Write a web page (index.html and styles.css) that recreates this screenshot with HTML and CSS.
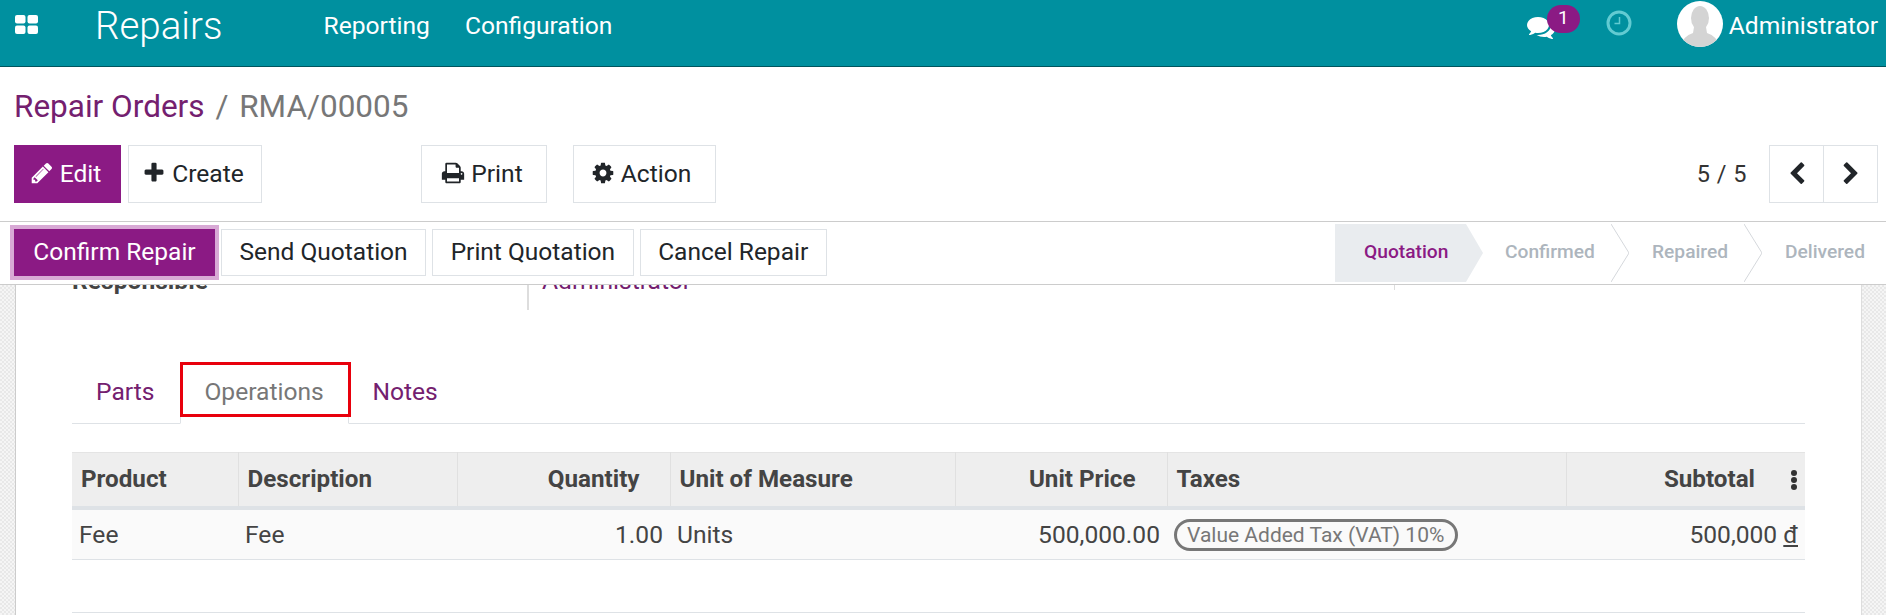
FILE: index.html
```html
<!DOCTYPE html>
<html lang="en">
<head>
    <meta charset="UTF-8">
    <meta name="viewport" content="width=device-width, initial-scale=1.0">
    <title>Repair Orders - RMA/00005</title>
    <link rel="stylesheet" href="styles.css">
</head>
<body>
    <header class="navbar">
        <div class="nav-left">
            <svg class="apps-icon" viewBox="0 0 23 19"><rect width="10.5" height="8.5" rx="2"/><rect x="12.5" width="10.5" height="8.5" rx="2"/><rect y="10.5" width="10.5" height="8.5" rx="2"/><rect x="12.5" y="10.5" width="10.5" height="8.5" rx="2"/></svg>
            <span class="app-name">Repairs</span>
            <a class="nav-link nav-link-first">Reporting</a>
            <a class="nav-link">Configuration</a>
        </div>
        <div class="nav-right">
            <div class="messages">
                <svg class="comments-icon" viewBox="0 0 1792 1792"><path d="M1408 768q0 139-94 257t-256.5 186.5-353.5 68.5q-86 0-176-16-124 88-278 128-36 9-86 16h-3q-11 0-20.5-8t-11.5-21q-1-3-1-6.5t.5-6.5 2-6l2.5-5 3.5-5.5 4-5 4.5-5 4-4.5q5-6 23-25t26-29.5 22.5-29 25-38.5 20.5-44q-124-72-195-177t-71-224q0-139 94-257t256.5-186.5 353.5-68.5 353.5 68.5 256.5 186.5 94 257zm384 256q0 120-71 224.5t-195 176.5q10 24 20.5 44t25 38.5 22.5 29 26 29.5 23 25q1 1 4 4.5t4.5 5 4 5 3.5 5.5l2.5 5 2 6 .5 6.5-1 6.5q-3 14-13 22t-22 7q-50-7-86-16-154-40-278-128-90 16-176 16-271 0-472-132 58 4 88 4 161 0 309-45t264-129q125-92 192-212t67-254q0-77-23-152 129 71 204 178t75 230z"/></svg>
                <span class="msg-badge">1</span>
            </div>
            <svg class="clock-icon" viewBox="0 0 26 26"><circle cx="13" cy="13" r="11" fill="none" stroke="#62cbd2" stroke-width="3"/><path d="M13.5 7v6.5H8.5" fill="none" stroke="#62cbd2" stroke-width="1.5"/></svg>
            <svg class="avatar" viewBox="0 0 46 46"><defs><clipPath id="avatar-clip"><circle cx="23" cy="23" r="23"/></clipPath></defs><circle cx="23" cy="23" r="23" fill="#fff"/><g clip-path="url(#avatar-clip)" fill="#d4d4d4"><ellipse cx="23" cy="17" rx="9" ry="12"/><path d="M17 26 L29 26 L30 32 Q40 35 43 46 L3 46 Q6 35 16 32 Z"/></g></svg>
            <span class="user-name">Administrator</span>
        </div>
    </header>

    <section class="control-panel">
        <div class="breadcrumb">
            <a class="crumb-link">Repair Orders</a>
            <span class="crumb-sep">/</span>
            <span class="crumb-current">RMA/00005</span>
        </div>
        <div class="cp-row">
            <div class="cp-buttons">
                <button class="btn btn-primary btn-edit"><svg class="icon" viewBox="0 0 1792 1792"><path d="M491 1536l91-91-235-235-91 91v107h128v128h107zm523-928q0-22-22-22-10 0-17 7l-542 542q-7 7-7 17 0 22 22 22 10 0 17-7l542-542q7-7 7-17zm-54-192l416 416-832 832h-416v-416zm683 96q0 53-37 90l-166 166-416-416 166-165q36-38 90-38 53 0 91 38l235 234q37 39 37 91z"/></svg>Edit</button>
                <button class="btn btn-create"><svg class="icon" viewBox="0 0 1792 1792"><path d="M1600 736v192q0 40-28 68t-68 28h-416v416q0 40-28 68t-68 28h-192q-40 0-68-28t-28-68v-416h-416q-40 0-68-28t-28-68v-192q0-40 28-68t68-28h416v-416q0-40 28-68t68-28h192q40 0 68 28t28 68v416h416q40 0 68 28t28 68z"/></svg>Create</button>
                <button class="btn btn-print"><svg class="icon" viewBox="0 0 1792 1792"><path d="M448 1536h896v-256h-896v256zm0-640h896v-384h-160q-40 0-68-28t-28-68v-160h-640v640zm1152 64q0-26-19-45t-45-19-45 19-19 45 19 45 45 19 45-19 19-45zm128 0v416q0 13-9.5 22.5t-22.5 9.5h-224v160q0 40-28 68t-68 28h-960q-40 0-68-28t-28-68v-160h-224q-13 0-22.5-9.5t-9.5-22.5v-416q0-79 56.5-135.5t135.5-56.5h64v-544q0-40 28-68t68-28h672q40 0 88 20t76 48l152 152q28 28 48 76t20 88v256h64q79 0 135.5 56.5t56.5 135.5z"/></svg>Print</button>
                <button class="btn btn-action"><svg class="icon" viewBox="0 0 1792 1792"><path d="M1152 896q0-106-75-181t-181-75-181 75-75 181 75 181 181 75 181-75 75-181zm512-109v222q0 12-8 23t-20 13l-185 28q-19 54-39 91 35 50 107 138 10 12 10 25t-9 23q-27 37-99 108t-94 71q-12 0-26-9l-138-108q-44 23-91 38-16 136-29 186-7 28-36 28h-222q-14 0-24.5-8.5t-11.5-21.5l-28-184q-49-16-90-37l-141 107q-10 9-25 9-14 0-25-11-126-114-165-168-7-10-7-23 0-12 8-23 15-21 51-66.5t54-70.5q-27-50-41-99l-183-27q-13-2-21-12.5t-8-23.5v-222q0-12 8-23t19-13l186-28q14-46 39-92-40-57-107-138-10-12-10-24 0-10 9-23 26-36 98.5-107.5t94.5-71.5q13 0 26 10l138 107q44-23 91-38 16-136 29-186 7-28 36-28h222q14 0 24.5 8.5t11.5 21.5l28 184q49 16 90 37l142-107q9-9 24-9 13 0 25 10 129 119 165 170 7 8 7 22 0 12-8 23-15 21-51 66.5t-54 70.5q26 50 41 98l183 28q13 2 21 12.5t8 23.5z"/></svg>Action</button>
            </div>
            <div class="pager">
                <span class="pager-value">5 / 5</span>
                <div class="pager-btns">
                    <button class="pager-btn"><svg class="icon" viewBox="0 0 1792 1792"><path d="M1427 301l-531 531 531 531q19 19 19 45t-19 45l-166 166q-19 19-45 19t-45-19l-742-742q-19-19-19-45t19-45l742-742q19-19 45-19t45 19l166 166q19 19 19 45t-19 45z"/></svg></button>
                    <button class="pager-btn"><svg class="icon" viewBox="0 0 1792 1792"><path d="M1363 877l-742 742q-19 19-45 19t-45-19l-166-166q-19-19-19-45t19-45l531-531-531-531q-19-19-19-45t19-45l166-166q19-19 45-19t45 19l742 742q19 19 19 45t-19 45z"/></svg></button>
                </div>
            </div>
        </div>
    </section>

    <section class="statusbar">
        <div class="status-actions">
            <button class="sbtn sbtn-primary">Confirm Repair</button>
            <button class="sbtn">Send Quotation</button>
            <button class="sbtn">Print Quotation</button>
            <button class="sbtn">Cancel Repair</button>
        </div>
        <div class="stages">
            <div class="stage stage-current">Quotation</div>
            <div class="stage stage-confirmed">Confirmed<svg class="stage-arrow" viewBox="0 0 18 58" preserveAspectRatio="none"><path d="M0 0L18 29L0 58" fill="none" stroke="#d5d8dc"/></svg></div>
            <div class="stage stage-repaired">Repaired<svg class="stage-arrow" viewBox="0 0 18 58" preserveAspectRatio="none"><path d="M0 0L18 29L0 58" fill="none" stroke="#d5d8dc"/></svg></div>
            <div class="stage stage-delivered">Delivered</div>
        </div>
    </section>

    <main class="form-view">
        <div class="sheet">
            <div class="clipped-group">
                <div class="clipped-col clipped-label"><span>Responsible</span></div>
                <div class="clipped-col clipped-value"><span>Administrator</span></div>
                <div class="clipped-col clipped-rest"></div>
            </div>

            <ul class="tabs">
                <li class="tab tab-parts">Parts</li>
                <li class="tab tab-active"><span class="tab-box">Operations</span></li>
                <li class="tab tab-notes">Notes</li>
            </ul>

            <table class="lines">
                <colgroup>
                    <col class="col-product">
                    <col class="col-desc">
                    <col class="col-qty">
                    <col class="col-uom">
                    <col class="col-price">
                    <col class="col-taxes">
                    <col>
                </colgroup>
                <thead>
                    <tr>
                        <th>Product</th>
                        <th>Description</th>
                        <th class="num th-qty">Quantity</th>
                        <th>Unit of Measure</th>
                        <th class="num th-price">Unit Price</th>
                        <th>Taxes</th>
                        <th class="num th-subtotal">Subtotal<svg class="dots" viewBox="0 0 8 20"><circle cx="4" cy="3" r="3"/><circle cx="4" cy="10" r="3"/><circle cx="4" cy="17" r="3"/></svg></th>
                    </tr>
                </thead>
                <tbody>
                    <tr>
                        <td>Fee</td>
                        <td>Fee</td>
                        <td class="num">1.00</td>
                        <td>Units</td>
                        <td class="num">500,000.00</td>
                        <td><span class="tax-tag">Value Added Tax (VAT) 10%</span></td>
                        <td class="num">500,000 <u>đ</u></td>
                    </tr>
                </tbody>
            </table>
            <div class="table-foot"></div>
        </div>
    </main>
</body>
</html>
```

FILE: styles.css
```css
* { box-sizing: border-box; }
html, body { margin: 0; height: 615px; overflow: hidden; }
body { font-family: Roboto, "Open Sans", sans-serif; font-size: 24.6px; color: #212529; background: #fff; }
button { font-family: inherit; }

/* top bar */
.navbar { height: 67px; background: #00909f; border-bottom: 1px solid #00555e; color: #fff; display: flex; justify-content: space-between; }
.nav-left { display: flex; align-items: flex-start; }
.apps-icon { width: 23px; height: 19px; fill: #fff; margin: 15px 0 0 15px; }
.app-name { font-size: 38.5px; font-weight: 300; line-height: 51px; margin-left: 57px; }
.nav-link { font-size: 24.6px; line-height: 51px; margin-left: 35px; }
.nav-link-first { margin-left: 101px; }
.nav-right { display: flex; align-items: flex-start; padding-right: 8px; }
.messages { display: flex; align-items: flex-start; margin-top: 5px; }
.comments-icon { width: 28px; height: 28px; fill: #fff; margin-top: 8px; }
.msg-badge { width: 33px; height: 28px; border-radius: 14px; background: #8b1a84; font-size: 19px; line-height: 26px; text-align: center; margin-left: -8px; }
.clock-icon { width: 26px; height: 26px; margin: 10px 0 0 26px; }
.avatar { width: 46px; height: 46px; margin: 1px 0 0 45px; }
.user-name { font-size: 24.6px; line-height: 51px; margin-left: 6px; }

/* breadcrumb and buttons */
.control-panel { height: 155px; padding: 0 8px 0 14px; border-bottom: 1px solid #ccc; }
.breadcrumb { height: 78px; padding-top: 21px; font-size: 31.5px; line-height: 38px; white-space: nowrap; }
.crumb-link { color: #74206f; }
.crumb-sep { color: #777; margin: 0 3px 0 3px; }
.crumb-current { color: #777; }
.cp-row { display: flex; justify-content: space-between; }
.cp-buttons { display: flex; }
.btn { height: 58px; border: 1px solid #dee2e6; background: #fff; color: #212529; font-size: 24.6px; padding: 0 4px 2px 0; display: flex; align-items: center; justify-content: center; }
.btn .icon { width: 24px; height: 24px; margin-right: 6px; fill: #212529; }
.btn-primary { background: #8b1a84; border-color: #8b1a84; color: #fff; }
.btn-primary .icon { fill: #fff; }
.btn-edit { width: 107px; }
.btn-create { width: 134px; margin-left: 7px; }
.btn-print { width: 126px; margin-left: 159px; }
.btn-action { width: 143px; margin-left: 26px; padding-right: 7px; }
.pager { display: flex; align-items: center; }
.pager-value { font-size: 23.5px; letter-spacing: 0.5px; margin-right: 22px; color: #333; }
.pager-btns { display: flex; }
.pager-btn { width: 55px; height: 58px; padding: 0; border: 1px solid #dee2e6; background: #fff; display: flex; align-items: center; justify-content: center; }
.pager-btn + .pager-btn { margin-left: -1px; }
.pager-btn .icon { width: 24px; height: 24px; fill: #212529; }

/* status bar */
.statusbar { height: 63px; border-bottom: 1px solid #ccc; padding-left: 14px; display: flex; justify-content: space-between; position: relative; z-index: 1; background: #fff; }
.status-actions { display: flex; gap: 6px; padding-top: 7px; }
.sbtn { height: 47px; padding: 0 17.5px 2px; background: #fff; border: 1px solid #dee2e6; color: #212529; font-size: 24.5px; }
.sbtn-primary { width: 201px; padding: 0 0 2px; background: #8b1a84; border-color: #8b1a84; color: #fff; outline: 4px solid #d8a9d5; }
.stages { display: flex; padding-top: 2px; height: 60px; }
.stage { height: 58px; font-size: 19.2px; font-weight: 500; line-height: 56px; color: #adb5bd; position: relative; }
.stage-arrow { position: absolute; left: 100%; top: 0; width: 18px; height: 58px; }
.stage-current { width: 148px; padding-left: 29px; color: #8b1a84; background: #e9ecef; clip-path: polygon(0 0, 131px 0, 148px 50%, 131px 100%, 0 100%); }
.stage-confirmed { width: 128px; padding-left: 22px; }
.stage-repaired { width: 133px; padding-left: 41px; }
.stage-delivered { width: 142px; padding-left: 41px; }

/* form area */
.form-view { height: 330px; overflow: hidden; padding: 0 24px 0 15px; background-color: #f5f5f5; background-image: linear-gradient(45deg, #e8e8e8 25%, transparent 25%, transparent 75%, #e8e8e8 75%), linear-gradient(45deg, #e8e8e8 25%, transparent 25%, transparent 75%, #e8e8e8 75%); background-size: 4px 4px; background-position: 0 0, 2px 2px; }
.sheet { height: 100%; background: #fff; border-left: 1px solid #ccc; border-right: 1px solid #ddd; padding: 0 56px; }

/* group scrolled under the status bar, only its lower edge shows */
.clipped-group { display: flex; height: 25px; overflow: hidden; align-items: flex-end; }
.clipped-col { height: 25px; display: flex; align-items: flex-end; }
.clipped-col span { line-height: 34px; white-space: nowrap; flex: none; margin-bottom: 12px; height: 34px; }
.clipped-label { width: 455px; font-weight: 700; color: #444; }
.clipped-value { width: 867px; padding-left: 13px; color: #74206f; border-left: 2px solid #ddd; }
.clipped-rest { width: 10px; height: 5px; align-self: flex-start; border-left: 1px solid #ddd; }

.tabs { list-style: none; margin: 52px 0 0; padding: 0; display: flex; height: 62px; border-bottom: 1px solid #dee2e6; color: #74206f; }
.tab { line-height: 59px; height: 62px; }
.tab-parts { padding: 0 26px 0 24px; }
.tab-notes { padding: 0 25px 0 23px; }
.tab-active { width: 169px; color: #777; border-left: 1px solid #dee2e6; border-right: 1px solid #dee2e6; border-bottom: 1px solid #fff; }
.tab-box { display: block; width: 171px; height: 55px; margin-left: -1px; padding-left: 21px; border: 3px solid #e8000c; line-height: 53px; }

.lines { width: 100%; margin-top: 28px; border-collapse: collapse; table-layout: fixed; }
.col-product { width: 166px; }
.col-desc { width: 219px; }
.col-qty { width: 213px; }
.col-uom { width: 285px; }
.col-price { width: 212px; }
.col-taxes { width: 399px; }
.lines th { height: 55px; background: #eee; border-top: 1px solid #e4e4e4; border-bottom: 4px solid #dee2e6; border-right: 1px solid #e0e0e0; padding: 0 9px 1px; text-align: left; font-size: 24.2px; font-weight: 700; color: #444; white-space: nowrap; }
.lines th:last-child { border-right: 0; }
.lines th.num { text-align: right; }
.lines th.th-qty { padding-right: 30px; }
.lines th.th-price { padding-right: 31px; }
.lines th.th-subtotal { padding-right: 7px; }
.dots { width: 8px; height: 20px; fill: #333; margin-left: 35px; vertical-align: -3px; }
.lines td { height: 52px; background: #fafafa; border-bottom: 1px solid #dee2e6; padding: 0 7px; color: #444; white-space: nowrap; }
.lines td.num { text-align: right; }
.tax-tag { display: inline-block; height: 32px; padding: 0 11px 0 10px; border: 3px solid #777; border-radius: 16px; font-size: 21px; line-height: 26px; color: #777; vertical-align: middle; }
.table-foot { height: 1px; margin-top: 52px; background: #dee2e6; }
```
